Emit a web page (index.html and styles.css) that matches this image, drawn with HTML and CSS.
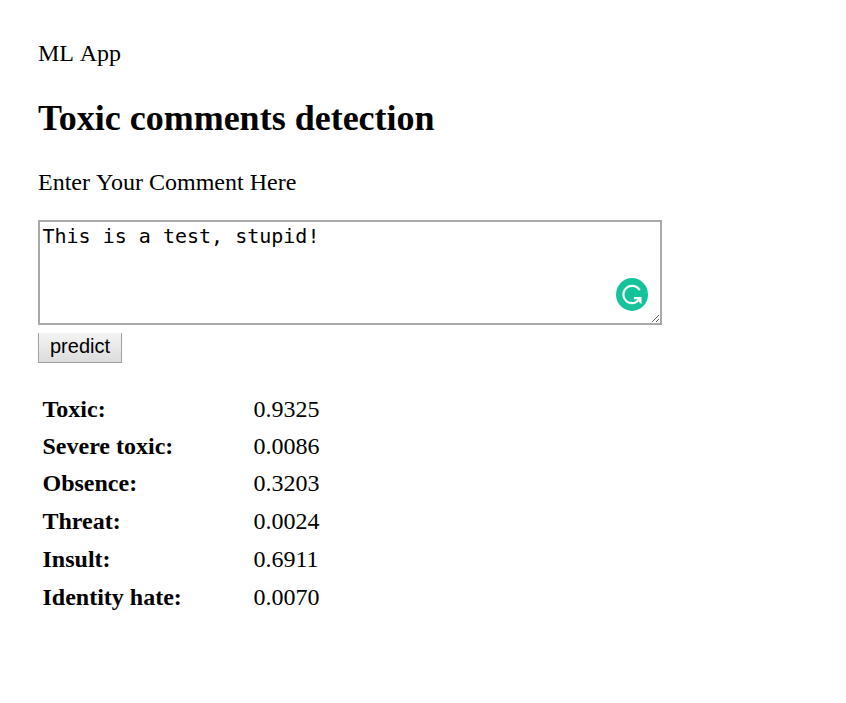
FILE: index.html
```html
<!DOCTYPE html>
<html lang="en">
<head>
<meta charset="utf-8">
<title>ML App</title>
<link rel="stylesheet" href="styles.css">
</head>
<body>
<div class="brand">ML App</div>
<h1 class="title">Toxic comments detection</h1>
<p class="prompt"><span class="lead">Enter Your</span> Comment Here</p>
<form class="form">
<div class="field">
<textarea class="comment" spellcheck="false">This is a test, stupid!</textarea>
<svg class="badge" viewBox="0 0 32 33" aria-hidden="true">
<ellipse cx="16" cy="16.5" rx="16" ry="16.4" fill="#15c39a"/>
<path d="M23.7 12.2A8.7 8.7 0 1 0 16 25.2C19.2 25.2 21.6 23.5 23 21" fill="none" stroke="#fff" stroke-width="2.2"/>
<path d="M18 19H25.5V26.3L22.9 24L21.4 21.2H18Z" fill="#fff"/>
</svg>
</div>
<button class="predict" type="button">predict</button>
</form>
<table class="scores">
<tr><th>Toxic:</th><td>0.9325</td></tr>
<tr><th>Severe toxic:</th><td>0.0086</td></tr>
<tr><th>Obsence:</th><td>0.3203</td></tr>
<tr><th>Threat:</th><td>0.0024</td></tr>
<tr><th>Insult:</th><td>0.6911</td></tr>
<tr><th>Identity hate:</th><td>0.0070</td></tr>
</table>
</body>
</html>
```
FILE: styles.css
```css
body {
  margin: 0;
  padding: 39px 38px;
  background: #fff;
  color: #000;
  font: 24px/28px "Liberation Serif", serif;
}
.brand {
  word-spacing: 2px;
}
.title {
  margin: 30px 0 0;
  font-size: 36px;
  line-height: 42px;
}
.prompt {
  margin: 29px 0 0;
}
.lead {
  word-spacing: 1px;
}
.form {
  margin: 24px 0 0;
}
.field {
  position: relative;
  width: 624px;
  height: 105px;
}
.comment {
  display: block;
  box-sizing: border-box;
  width: 624px;
  height: 105px;
  margin: 0;
  padding: 3px 2.5px;
  border: 2px solid #a9a9a9;
  font: 20px/23px "DejaVu Sans Mono", monospace;
}
.badge {
  position: absolute;
  left: 578px;
  top: 58px;
  width: 32px;
  height: 33px;
}
.predict {
  display: block;
  box-sizing: border-box;
  width: 84px;
  height: 30px;
  margin-top: 8px;
  padding: 0 0 3px;
  border: 1px solid #a0a0a0;
  border-top: 0;
  border-radius: 0 0 1px 1px;
  background: linear-gradient(#f4f4f4, #dcdcdc);
  color: #000;
  font: 20px/27px "Liberation Sans", sans-serif;
}
.scores {
  margin-top: 32px;
  border-collapse: collapse;
}
.scores th,
.scores td {
  height: 38px;
  padding: 0;
  vertical-align: top;
  text-align: left;
}
.scores tr:nth-child(-n+2) > * {
  height: 37px;
}
.scores th {
  width: 211px;
  padding-left: 4.5px;
}
```
